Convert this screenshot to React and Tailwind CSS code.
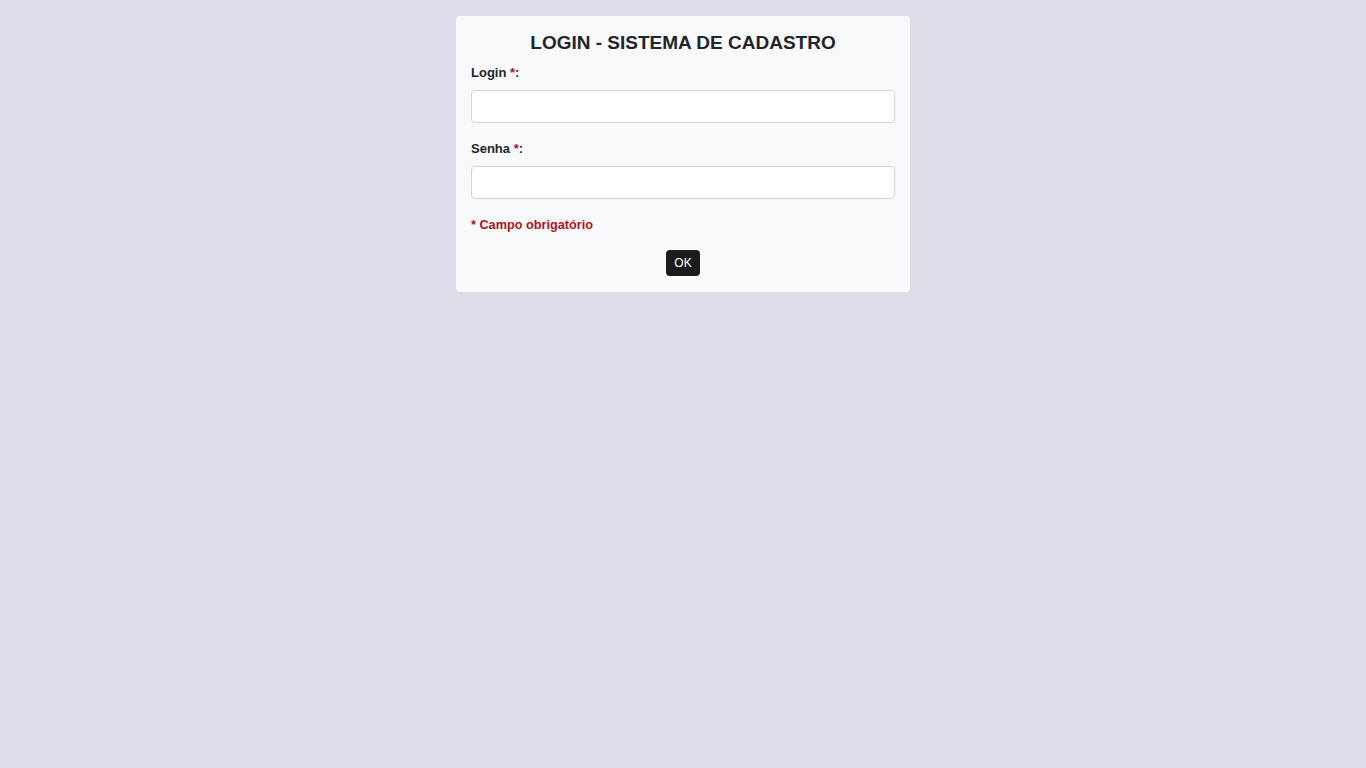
export default function App() {
  return (
    <div className="min-h-[768px] bg-[#dcdde8] pt-4 font-['Liberation_Sans',Arial,sans-serif] text-[#212529]">
      <div className="mx-auto w-[454px] rounded-[4px] bg-[#f8f9fa] px-[15px] pt-[15px] pb-4">
        <h1 className="text-center text-[19px] leading-6 font-bold">LOGIN - SISTEMA DE CADASTRO</h1>

        <label className="mt-[9px] block text-[13px] leading-[18px] font-bold">
          Login <span className="text-[#b0101c]">*</span>:
        </label>
        <input
          type="text"
          className="mt-2 block h-[33px] w-full rounded-[4px] border border-[#ced4da] bg-white px-3 outline-none"
        />

        <label className="mt-[17px] block text-[13px] leading-[18px] font-bold">
          Senha <span className="text-[#b0101c]">*</span>:
        </label>
        <input
          type="password"
          className="mt-2 block h-[33px] w-full rounded-[4px] border border-[#ced4da] bg-white px-3 outline-none"
        />

        <p className="mt-[17px] text-[12.7px] leading-[18px] font-bold text-[#b0101c]">* Campo obrigatório</p>

        <div className="mt-4 flex justify-center">
          <button className="h-[26px] w-[34px] rounded-[4px] bg-[#1a1b1e] text-[12px] text-white">OK</button>
        </div>
      </div>
    </div>
  );
}
